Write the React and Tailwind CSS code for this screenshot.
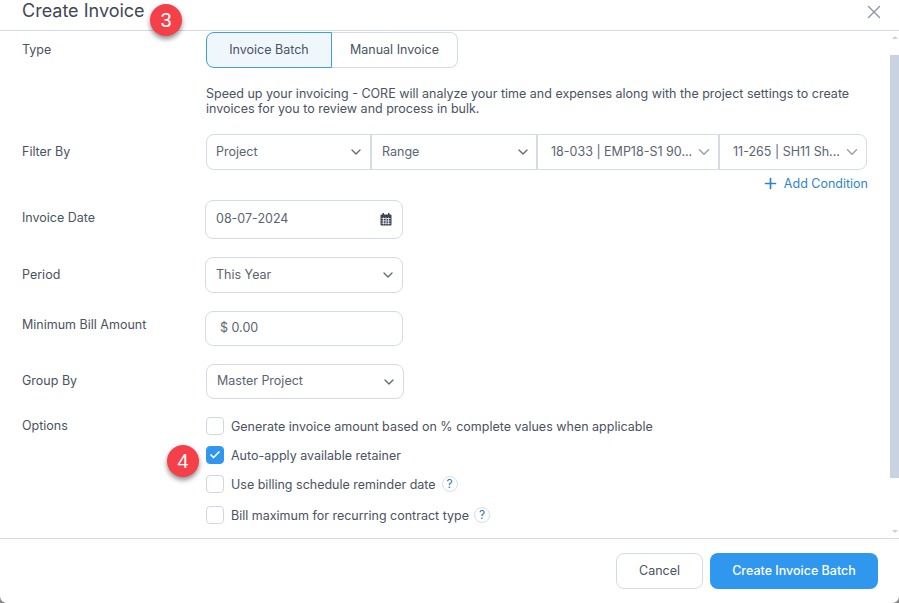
import React from "react";
import { ChevronDown, Plus, X, Check } from "lucide-react";

const Chevron = ({ className = "text-[#5f6b7a]", size = 16 }) => (
  <ChevronDown size={size} strokeWidth={2} className={`shrink-0 ${className}`} />
);

const Row = ({ label, labelClass = "", className = "", children }) => (
  <div className={`flex items-start ${className}`}>
    <div className={`w-[183px] shrink-0 text-[12.5px] leading-[16px] text-[#4a5361] ${labelClass}`}>{label}</div>
    {children}
  </div>
);

const Select = ({ text, className = "" }) => (
  <div className={`flex items-center justify-between rounded-[8px] border border-[#d5dbe6] pl-[10px] pr-[6px] text-[12.5px] text-[#5a6472] bg-white ${className}`}>
    <span>{text}</span>
    <Chevron />
  </div>
);

const Seg = ({ text, className = "", chevron, size }) => (
  <div className={`flex h-full items-center justify-between ${className}`}>
    <span className="whitespace-nowrap">{text}</span>
    <Chevron className={chevron} size={size} />
  </div>
);

const Help = ({ className = "ml-[5px]" }) => (
  <span className={`flex h-[16px] w-[16px] items-center justify-center rounded-full border border-[#d5dfe9] text-[12px] leading-none text-[#2a7ab8] ${className}`}>?</span>
);

const Opt = ({ checked, children, className = "" }) => (
  <div className={`flex items-center text-[12.5px] leading-[17px] text-[#4a5361] ${className}`}>
    <span
      className={`mr-[7px] flex h-[18px] w-[18px] shrink-0 items-center justify-center rounded-[4px] border ${
        checked ? "border-[#2f97ee] bg-[#2f97ee]" : "border-[#cfd7e6] bg-white"
      }`}
    >
      {checked && <Check size={12} strokeWidth={3.5} className="text-white" />}
    </span>
    {children}
  </div>
);

const Badge = ({ n, className = "" }) => (
  <div className={`absolute flex h-[32px] w-[32px] items-center justify-center rounded-full bg-[#f5404a] font-['Liberation_Sans',sans-serif] text-[20px] text-white shadow-[0_3px_5px_rgba(0,0,0,0.45)] ${className}`}>
    {n}
  </div>
);

export default function App() {
  return (
    <div className="h-[603px] w-[899px] overflow-hidden bg-[#8a8a8a] font-['Inter',sans-serif]">
      <div className="relative flex h-full w-full flex-col rounded-b-[7px] bg-white">
        <header className="flex h-[31px] shrink-0 items-start justify-between border-b border-[#d5dbe6] pl-[22px] pr-[14px]">
          <h1 className="text-[18px] leading-[22px] text-[#3f4856]">Create Invoice</h1>
          <X size={22} strokeWidth={1.5} className="mt-px text-[#8a96a8]" />
        </header>

        <div className="flex min-h-0 flex-1">
          <main className="min-w-0 flex-1 pl-[22px] pt-px">
            <Row label="Type" labelClass="pt-[10px]">
              <div className="ml-px">
                <div className="flex h-[36px] text-[12.5px] text-[#4a5361]">
                  <div className="flex w-[126px] items-center justify-center rounded-l-[8px] border border-[#3b9fe2] bg-[#eff7fd]">Invoice Batch</div>
                  <div className="flex w-[126px] items-center justify-center rounded-r-[8px] border border-l-0 border-[#d5dbe6]">Manual Invoice</div>
                </div>
                <p className="mt-[18px] w-[660px] text-[12.5px] leading-[15px] text-[#4a5361]">
                  Speed up your invoicing - CORE will analyze your time and expenses along with the project settings to create invoices for you to review and process in bulk.
                </p>
              </div>
            </Row>

            <Row label="Filter By" labelClass="pt-[10px]" className="mt-[18px]">
              <div className="ml-px w-[661px]">
                <div className="flex h-[36px] rounded-[8px] border border-[#d5dbe6] text-[12.5px] text-[#5a6472]">
                  <Seg text="Project" className="w-[165px] border-r-2 border-[#d5dbe6] pl-[9px] pr-[6px]" />
                  <Seg text="Range" className="w-[166px] border-r-2 border-[#d5dbe6] pl-[10px] pr-[5px]" />
                  <Seg text="18-033 | EMP18-S1 90..." chevron="text-[#9aa3af]" size={18} className="w-[182px] border-r-2 border-[#d5dbe6] pl-[13px] pr-[5px]" />
                  <Seg text="11-265 | SH11 Sh..." chevron="text-[#9aa3af]" size={18} className="flex-1 pl-[13px] pr-[5px]" />
                </div>
                <div className="-mr-px mt-[5px] flex items-center justify-end text-[12.5px] leading-[16px] text-[#2d86c9]">
                  <Plus size={17} strokeWidth={2.4} className="mr-[5px]" />
                  Add Condition
                </div>
              </div>
            </Row>

            <Row label="Invoice Date" labelClass="pt-[10px]" className="mt-[8px]">
              <div className="flex h-[39px] w-[198px] items-center justify-between rounded-[8px] border border-[#d5dbe6] pl-[10px] pr-[10px] text-[12.5px] text-[#5a6472]">
                <span>08-07-2024</span>
                <svg width="12" height="13" viewBox="0 0 12 13" fill="none" className="text-[#3c4552]">
                  <rect x="0.5" y="1.5" width="11" height="11" rx="1" fill="currentColor" />
                  <rect x="2.5" y="0" width="1.5" height="3" fill="currentColor" />
                  <rect x="8" y="0" width="1.5" height="3" fill="currentColor" />
                  <path d="M1.5 5.5h9M1.5 7.9h9M1.5 10.3h9M3.5 4.5v7M6 4.5v7M8.5 4.5v7" stroke="#fff" strokeWidth="0.7" />
                </svg>
              </div>
            </Row>

            <Row label="Period" labelClass="pt-[10px]" className="mt-[18px]">
              <Select text="This Year" className="h-[36px] w-[198px]" />
            </Row>

            <Row label="Minimum Bill Amount" labelClass="pt-[6px]" className="mt-[18px]">
              <div className="flex h-[35px] w-[198px] items-center rounded-[8px] border border-[#d5dbe6] pl-[14px] text-[12.5px] text-[#5a6472]">$ 0.00</div>
            </Row>

            <Row label="Group By" labelClass="pt-[9px]" className="mt-[18px]">
              <Select text="Master Project" className="ml-px h-[35px] w-[198px]" />
            </Row>

            <Row label="Options" labelClass="pt-px" className="mt-[18px]">
              <div className="ml-px">
                <Opt>Generate invoice amount based on % complete values when applicable</Opt>
                <Opt checked className="mt-[11px]">Auto-apply available retainer</Opt>
                <Opt className="mt-[11px]">Use billing schedule reminder date<Help className="ml-[6px]" /></Opt>
                <Opt className="mt-[13px]">Bill maximum for recurring contract type<Help /></Opt>
              </div>
            </Row>
          </main>

          <div className="flex w-[9px] shrink-0 flex-col items-center">
            <div className="mt-[5px] h-0 w-0 border-x-[3px] border-b-[3px] border-x-transparent border-b-[#c8d0de]" />
            <div className="mt-[16px] h-[423px] w-full bg-[#c8d2e0]" />
            <div className="mt-auto mb-[5px] h-0 w-0 border-x-[3px] border-t-[3px] border-x-transparent border-t-[#c8d0de]" />
          </div>
        </div>

        <footer className="flex h-[65px] shrink-0 items-start justify-end gap-[7px] border-t border-[#d5dbe6] pr-[21px] pt-[14px] text-[12.5px]">
          <button className="h-[36px] w-[87px] rounded-[8px] border border-[#d5dbe6] bg-white text-[#4a5361]">Cancel</button>
          <button className="h-[36px] w-[168px] rounded-[8px] bg-[#2f97ee] font-medium text-white">Create Invoice Batch</button>
        </footer>

        <Badge n="3" className="left-[150px] top-[4px]" />
        <Badge n="4" className="left-[167px] top-[445px]" />
      </div>
    </div>
  );
}
